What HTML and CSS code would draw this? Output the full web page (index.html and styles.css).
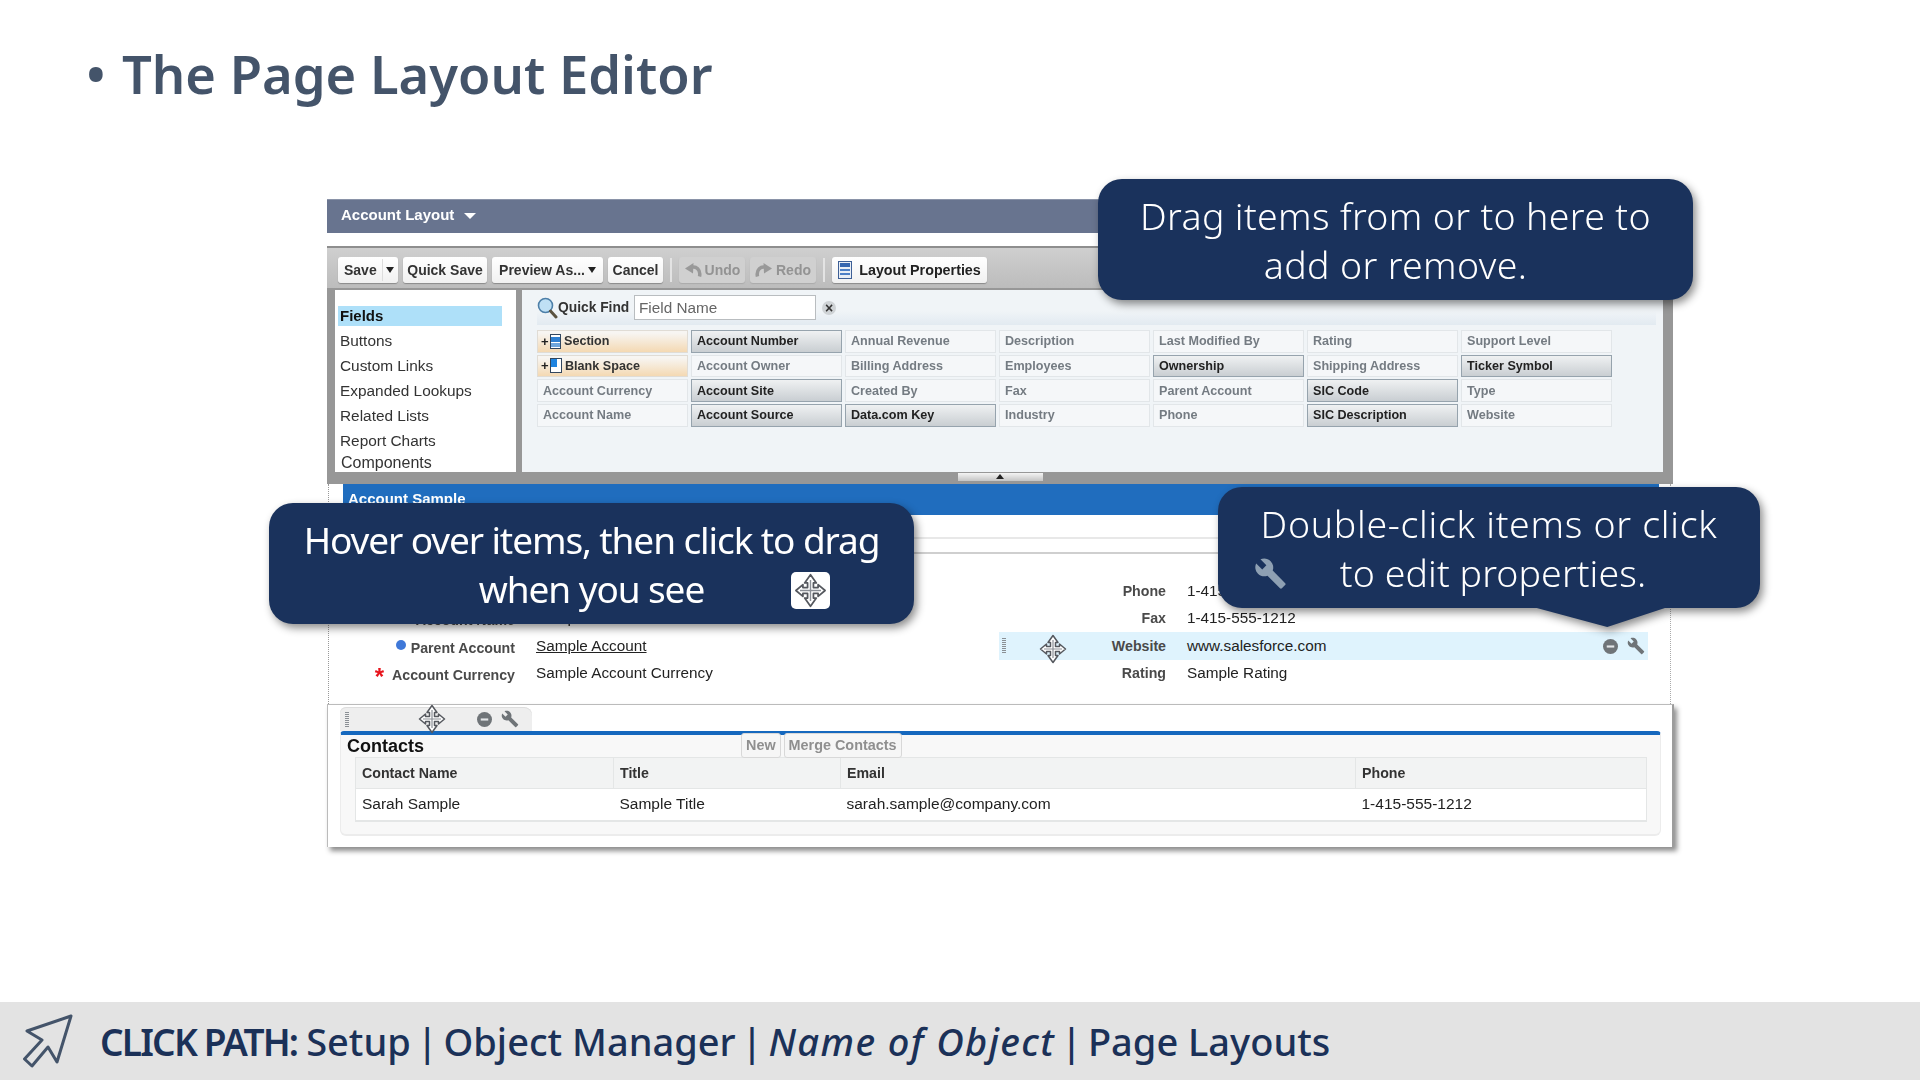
FILE: index.html
```html
<!DOCTYPE html>
<html lang="en">
<head>
<meta charset="utf-8">
<title>The Page Layout Editor</title>
<link rel="stylesheet" href="styles.css">
</head>
<body>
<svg class="defs" width="0" height="0" aria-hidden="true">
  <defs>
    <symbol id="move" viewBox="0 0 28 30">
      <path d="M14 1.5 19 8.5H16.5V12.5H20.5V10L26.5 15 20.5 20V17.5H16.5V21.5H19L14 28.5 9 21.5H11.5V17.5H7.5V20L1.5 15 7.5 10V12.5H11.5V8.5H9Z" fill="#fff" stroke="#55585e" stroke-width="1.5" stroke-linejoin="round"/>
      <path d="M14 6V24M5 15H23" stroke="#8b8f96" stroke-width="1.2" fill="none"/>
    </symbol>
    <symbol id="wrench" viewBox="0 0 24 24">
      <path d="M22.7 19l-9.1-9.1c.9-2.3.4-5-1.5-6.9-2-2-5-2.4-7.4-1.3L9 6 6 9 1.6 4.7C.4 7.1.9 10.1 2.9 12.1c1.9 1.9 4.6 2.4 6.9 1.5l9.1 9.1c.4.4 1 .4 1.4 0l2.3-2.3c.5-.4.5-1.1.1-1.4z"/>
    </symbol>
    <symbol id="minus" viewBox="0 0 14 14">
      <circle cx="7" cy="7" r="7" fill="#6f7478"/>
      <rect x="3.5" y="6" width="7" height="2" fill="#e4e6e8"/>
    </symbol>
  </defs>
</svg>
<main class="slide">
  <h1 class="title"><span class="bullet">•</span>The Page Layout Editor</h1>

  <section class="shot">
    <div class="layout-bar">Account Layout <i class="caret caret-white"></i></div>

    <div class="editor">
      <div class="toolbar">
        <button class="btn btn-split">Save<span class="split"><i class="caret"></i></span></button>
        <button class="btn btn-quick">Quick Save</button>
        <button class="btn btn-preview">Preview As...<i class="caret"></i></button>
        <button class="btn btn-cancel">Cancel</button>
        <span class="sep"></span>
        <button class="btn btn-off">
          <svg width="18" height="16" viewBox="0 0 18 16"><path d="M15.500 14.500C17 8 12 3.500 7 5.500" fill="none" stroke="#999" stroke-width="3.500"/><path d="M1 6.500 9.500 1 9 11.500Z" fill="#999"/></svg>Undo</button>
        <button class="btn btn-off">
          <svg width="18" height="16" viewBox="0 0 18 16"><path d="M2.500 14.500C1 8 6 3.500 11 5.500" fill="none" stroke="#999" stroke-width="3.500"/><path d="M17 6.500 8.500 1 9 11.500Z" fill="#999"/></svg>Redo</button>
        <span class="sep"></span>
        <button class="btn btn-props">
          <svg width="14" height="18" viewBox="0 0 14 18"><rect x=".5" y=".5" width="13" height="17" fill="#e8eef6" stroke="#3d5f96"/><rect x="2" y="2" width="10" height="4" fill="#3566b0"/><path d="M2 8h10v2H2zM2 12h10v2H2z" fill="#4c7fc6"/></svg>Layout Properties</button>
      </div>

      <div class="editor-body">
        <nav class="side">
          <a class="side-item side-on">Fields</a>
          <a class="side-item">Buttons</a>
          <a class="side-item">Custom Links</a>
          <a class="side-item">Expanded Lookups</a>
          <a class="side-item">Related Lists</a>
          <a class="side-item">Report Charts</a>
          <a class="side-item side-last">Components</a>
        </nav>
        <div class="pane">
          <div class="quick">
            <svg class="lens" width="21" height="22" viewBox="0 0 21 22"><circle cx="8.500" cy="8.500" r="7" fill="#bfe0f5" stroke="#4d7fa8" stroke-width="1.600"/><path d="M13.500 14 19 20" stroke="#5b5340" stroke-width="3" stroke-linecap="round"/></svg>
            <b class="quick-label">Quick Find</b>
            <span class="quick-input">Field Name</span>
            <span class="quick-clear">×</span>
          </div>
          <div class="palette">
            <div class="tile tile-add"><span class="plus">+</span><svg width="11" height="15" viewBox="0 0 11 15"><rect x=".5" y=".5" width="10" height="14" fill="#fff" stroke="#31465f"/><rect x="1" y="3" width="9" height="5" fill="#2f7fd0"/><rect x="1" y="9" width="9" height="4" fill="#6fa6dc"/></svg>Section</div>
            <div class="tile tile-on">Account Number</div>
            <div class="tile">Annual Revenue</div>
            <div class="tile">Description</div>
            <div class="tile">Last Modified By</div>
            <div class="tile">Rating</div>
            <div class="tile">Support Level</div>

            <div class="tile tile-add"><span class="plus">+</span><svg width="12" height="15" viewBox="0 0 12 15"><rect x=".5" y=".5" width="11" height="14" fill="#fff" stroke="#31465f"/><rect x="1" y="1" width="6" height="8" fill="#1f84e0"/></svg>Blank Space</div>
            <div class="tile">Account Owner</div>
            <div class="tile">Billing Address</div>
            <div class="tile">Employees</div>
            <div class="tile tile-on">Ownership</div>
            <div class="tile">Shipping Address</div>
            <div class="tile tile-on">Ticker Symbol</div>

            <div class="tile">Account Currency</div>
            <div class="tile tile-on">Account Site</div>
            <div class="tile">Created By</div>
            <div class="tile">Fax</div>
            <div class="tile">Parent Account</div>
            <div class="tile tile-on">SIC Code</div>
            <div class="tile">Type</div>

            <div class="tile">Account Name</div>
            <div class="tile tile-on">Account Source</div>
            <div class="tile tile-on">Data.com Key</div>
            <div class="tile">Industry</div>
            <div class="tile">Phone</div>
            <div class="tile tile-on">SIC Description</div>
            <div class="tile">Website</div>
          </div>
        </div>
      </div>
      <div class="editor-foot"><span class="collapse"><i class="caret-up"></i></span></div>
    </div>

    <div class="canvas">
      <div class="record-bar">Account Sample</div>
      <div class="band"></div>
      <div class="fields">
        <div class="col">
          <div class="row"></div>
          <div class="row"><span class="lab lab-low">Account Name</span><span class="val">Sample Account Name</span></div>
          <div class="row"><span class="lab lab-low"><i class="dot"></i>Parent Account</span><a class="val val-link">Sample Account</a></div>
          <div class="row"><span class="lab lab-low"><i class="star">*</i>Account Currency</span><span class="val">Sample Account Currency</span></div>
        </div>
        <div class="col col-right">
          <div class="row"><span class="lab">Phone</span><span class="val">1-415-555-1212</span></div>
          <div class="row"><span class="lab">Fax</span><span class="val">1-415-555-1212</span></div>
          <div class="row row-hover">
            <i class="handle handle-row"></i>
            <svg class="move move-row"><use href="#move"/></svg>
            <span class="lab">Website</span><span class="val">www.salesforce.com</span>
            <span class="row-tools">
              <svg class="ico-minus"><use href="#minus"/></svg>
              <svg class="ico-wrench"><use href="#wrench"/></svg>
            </span>
          </div>
          <div class="row"><span class="lab">Rating</span><span class="val">Sample Rating</span></div>
        </div>
      </div>
    </div>

    <div class="related-zone">
      <div class="tab">
        <i class="handle"></i>
        <svg class="move move-tab"><use href="#move"/></svg>
        <svg class="ico-minus ico-minus-tab"><use href="#minus"/></svg>
        <svg class="ico-wrench ico-wrench-tab"><use href="#wrench"/></svg>
      </div>
      <div class="related">
        <div class="related-head">
          <b class="related-title">Contacts</b>
          <span class="ghost">New</span>
          <span class="ghost">Merge Contacts</span>
        </div>
        <table class="grid">
          <thead><tr><th class="c1">Contact Name</th><th class="c2">Title</th><th class="c3">Email</th><th class="c4">Phone</th></tr></thead>
          <tbody><tr><td>Sarah Sample</td><td>Sample Title</td><td>sarah.sample@company.com</td><td>1-415-555-1212</td></tr></tbody>
        </table>
      </div>
    </div>
  </section>

  <div class="callout callout-drag">Drag items from or to here to<br>add or remove.</div>
  <div class="callout callout-hover">Hover over items, then click to drag<br>when you see
    <span class="chip"><svg class="chip-move"><use href="#move"/></svg></span>
  </div>
  <div class="callout callout-edit"><span class="edit-first">Double-click items or click</span><br><span class="edit-line">to edit properties.</span>
    <svg class="callout-wrench"><use href="#wrench"/></svg>
  </div>

  <footer class="path">
    <svg class="plane" width="60" height="60" viewBox="0 0 60 60"><path d="M51 5 7 20 22 29 4.500 48 12 55 28 36 37 51Z" fill="none" stroke="#44546a" stroke-width="3" stroke-linejoin="round"/></svg>
    <p class="path-text"><b>CLICK PATH:</b> Setup | <span class="seg">Object Manager</span> | <em class="seg">Name of Object</em> | <span class="seg">Page Layouts</span></p>
  </footer>
</main>
</body>
</html>
```

FILE: styles.css
```css
* { box-sizing: border-box; }
html, body { margin: 0; padding: 0; background: #fff; }
.defs { position: absolute; }
.slide {
  position: relative;
  width: 1920px;
  height: 1080px;
  overflow: hidden;
  display: flex;
  flex-direction: column;
  font-family: "Liberation Sans", Arial, sans-serif;
}

/* title */
.title {
  margin: 0;
  height: 199px;
  padding: 35px 0 0 86px;
  font: 600 52.500px/78px "Noto Sans", sans-serif;
  color: #44546a;
}
.bullet { display: inline-block; width: 36px; }

/* screenshot */
.shot { width: 1348px; margin-left: 327px; filter: blur(.35px); }
.layout-bar {
  height: 34px;
  padding-left: 14px;
  background: #68748f;
  border-top: 1px solid #8a93a8;
  color: #fff;
  font: bold 15px/30px "Liberation Sans", sans-serif;
}
.caret {
  display: inline-block;
  width: 0; height: 0;
  border: 4px solid transparent;
  border-top: 6px solid #222;
  border-bottom: 0;
  vertical-align: middle;
}
.caret-white { border-top-color: #fff; border-left-width: 6px; border-right-width: 6px; margin-left: 5px; }

.editor {
  width: 1346px;
  height: 238px;
  margin-top: 13px;
  display: flex;
  flex-direction: column;
  background: #979797;
  border-top: 2px solid #8e8e8e;
}
.toolbar {
  height: 40px;
  flex: none;
  display: flex;
  align-items: flex-start;
  padding: 9px 0 0 11px;
  gap: 5px;
  background: linear-gradient(#cfcfcf, #bcbcbc);
}
.btn {
  height: 26px;
  border: 0;
  border-radius: 3px;
  padding: 0;
  display: inline-flex;
  align-items: center;
  justify-content: center;
  gap: 5px;
  background: linear-gradient(#fff, #f1f1f1);
  box-shadow: 0 1px 1px #8a8a8a;
  color: #333;
  font: bold 14px "Liberation Sans", sans-serif;
  white-space: nowrap;
}
.btn-split { width: 60px; justify-content: flex-start; padding-left: 6px; gap: 5px; }
.split { border-left: 1px solid #ddd; height: 22px; width: 17px; display: flex; align-items: center; justify-content: center; }
.btn-quick { width: 84px; }
.btn-preview { width: 111px; gap: 3px; }
.btn-cancel { width: 55px; }
.btn-off {
  width: 66px;
  gap: 3px;
  background: #d0d0d0;
  color: #939393;
  box-shadow: 0 1px 1px #aaa;
}
.btn-props { width: 155px; gap: 7px; color: #222; font-size: 14.300px; }
.sep { width: 2px; height: 24px; margin: 1px 2px 0; background: #e3e3e3; }

.editor-body {
  flex: 1;
  min-height: 0;
  display: flex;
  gap: 6px;
  padding: 2px 10px 0 8px;
}
.side { width: 181px; padding: 16px 0 0 3px; background: #fff; }
.side-item {
  display: block;
  height: 20px;
  margin-bottom: 5px;
  padding-left: 2px;
  font: 15.400px/20px "Liberation Sans", sans-serif;
  color: #333;
  white-space: nowrap;
}
.side-on { width: 164px; background: #aee0f9; font-weight: bold; color: #111; font-size: 15px; }
.side-last { margin: -3px 0 0 1px; font-size: 16px; }
.pane { flex: 1; background: #f0f4f7; padding: 0 7px 0 15px; }
.quick {
  height: 35px;
  display: flex;
  align-items: center;
  background: linear-gradient(#f0f4f7 60%, #e2eaf1);
}
.lens { flex: none; }
.quick-label { margin-left: 0; font-size: 13.800px; width: 76px; color: #333; white-space: nowrap; }
.quick-input {
  width: 182px;
  height: 25px;
  padding-left: 4px;
  background: #fff;
  border: 1px solid #b9bdc0;
  color: #666;
  font-size: 15.300px;
  line-height: 24px;
}
.quick-clear {
  width: 14px; height: 14px;
  margin-left: 6px;
  border-radius: 50%;
  background: #cfd3d6;
  color: #333;
  font: bold 14px/14px "Liberation Sans", sans-serif;
  text-align: center;
}
.palette {
  margin-top: 5px;
  display: grid;
  grid-template-columns: repeat(7, 151px);
  grid-auto-rows: 22.600px;
  column-gap: 3px;
  row-gap: 2.100px;
}
.tile {
  display: flex;
  align-items: center;
  padding-left: 5px;
  background: #f5f7f9;
  border: 1px solid #e2e6e9;
  color: #747b82;
  font: bold 12.600px "Liberation Sans", sans-serif;
  white-space: nowrap;
}
.tile-on {
  background: linear-gradient(#eff1f2, #c9ced2);
  border-color: #96a3ad;
  color: #222;
}
.tile-add {
  padding-left: 3px;
  gap: 3px;
  background: linear-gradient(#f7f5f2 10%, #f4d9b3);
  border-color: #e0dcd5;
  color: #333;
}
.plus { font-size: 13px; color: #222; width: 6px; }
.editor-foot { height: 12px; flex: none; display: flex; justify-content: center; }
.collapse {
  width: 85px; height: 8px;
  margin-top: 1px;
  display: flex;
  justify-content: center;
  background: linear-gradient(#f4f4f4, #c4c4c4);
}
.caret-up {
  width: 0; height: 0;
  margin-top: 1px;
  border: 4px solid transparent;
  border-bottom: 5px solid #222;
  border-top: 0;
}

.canvas {
  height: 220px;
  width: 1343px;
  margin-left: 1px;
  border-left: 1px dotted #999;
  border-right: 1px dotted #aaa;
}
.record-bar {
  height: 31px;
  margin: 0 11px 0 14px;
  padding-left: 5px;
  background: #206dbe;
  color: #fff;
  font: bold 15px/30px "Liberation Sans", sans-serif;
}
.band {
  height: 17px;
  margin-top: 22px;
  border-top: 2px solid #e8e8e8;
  border-bottom: 2px solid #cfcfcf;
}
.fields {
  padding-top: 23px;
  display: grid;
  grid-template-columns: 670px 649px;
}
.col { display: flex; flex-direction: column; }
.row {
  position: relative;
  height: 27.500px;
  display: grid;
  grid-template-columns: 186px 1fr;
  column-gap: 21px;
  align-items: center;
}
.col-right .row { grid-template-columns: 167px 1fr; }
.lab {
  text-align: right;
  font: bold 14.200px "Liberation Sans", sans-serif;
  color: #4a4a4a;
  white-space: nowrap;
}
.lab-low { padding-top: 4px; }
.val { font: 15.300px "Liberation Sans", sans-serif; color: #222; white-space: nowrap; }
.val-link { text-decoration: underline; }
.dot {
  display: inline-block;
  width: 10px; height: 10px;
  margin-right: 5px;
  border-radius: 50%;
  background: #3f78d8;
  vertical-align: 3px;
}
.star {
  display: inline-block;
  margin-right: 8px;
  color: #e8141c;
  font: bold 24px/14px "Liberation Sans", sans-serif;
  vertical-align: -5px;
}
.row-hover { background: #dff3fd; }
.handle {
  display: block;
  width: 4px; height: 15px;
  background: repeating-linear-gradient(#8a8f94 0 1px, transparent 1px 2px);
}
.handle-row { position: absolute; left: 3px; top: 6px; }
.move { width: 28px; height: 30px; display: block; }
.move-row { position: absolute; left: 40px; top: 2px; }
.row-tools { position: absolute; right: 3px; top: 5px; display: flex; align-items: center; gap: 9px; }
.ico-minus { width: 15px; height: 15px; display: block; }
.ico-wrench { width: 18px; height: 18px; display: block; fill: #6f7478; }

.related-zone {
  height: 143px;
  width: 1347px;
  padding-top: 2px;
  background: #fff;
  border-top: 1px solid #bbb;
  border-left: 1px solid #bbb;
  border-right: 2px solid #9c9c9c;
  box-shadow: 3px 4px 5px rgba(0, 0, 0, .45);
}
.tab {
  width: 192px;
  height: 24px;
  margin-left: 12px;
  padding-left: 5px;
  display: flex;
  align-items: center;
  background: #eeeeee;
  border-radius: 6px 8px 0 0;
  box-shadow: inset 0 1px 0 #ddd;
}
.move-tab { margin-left: 69px; position: relative; z-index: 1; flex: none; }
.ico-minus-tab { margin-left: 31px; }
.ico-wrench-tab { margin-left: 9px; }
.related {
  width: 1321px;
  height: 105px;
  margin-left: 12px;
  background: #f8f8f8;
  border-top: 4px solid #1568be;
  border-left: 1px solid #ececec;
  border-right: 1px solid #ececec;
  border-bottom: 2px solid #ececec;
  border-radius: 4px 4px 6px 6px;
}
.related-head {
  height: 22px;
  display: flex;
  align-items: center;
}
.related-title { width: 400px; padding-left: 6px; font-size: 18px; color: #111; }
.ghost {
  height: 25px;
  margin: -2px 3px -1px 0;
  padding: 0 4px;
  background: #f6f6f6;
  border: 1px solid #d8d8d8;
  border-radius: 3px;
  color: #8f8f8f;
  font: bold 14.400px/23px "Liberation Sans", sans-serif;
}
.grid {
  width: 1291px;
  margin-left: 14px;
  table-layout: fixed;
  border-collapse: collapse;
  background: #fff;
}
.c1 { width: 258px; }
.c2 { width: 227px; }
.c3 { width: 515px; }
.c4 { width: 291px; }
.grid th {
  height: 31px;
  padding: 0 0 0 6px;
  text-align: left;
  background: #f2f3f3;
  border: 1px solid #e4e6e6;
  font: bold 14.200px "Liberation Sans", sans-serif;
  color: #333;
}
.grid td {
  height: 32px;
  padding: 0 0 0 6px;
  border-bottom: 2px solid #e4e6e6;
  font: 15.500px "Liberation Sans", sans-serif;
  color: #222;
}
.grid td:first-child { border-left: 1px solid #e4e6e6; }
.grid td:last-child { border-right: 1px solid #e4e6e6; }

/* callouts */
.callout {
  position: absolute;
  display: block;
  height: 121px;
  padding-top: 12px;
  background: #1a325c;
  border-radius: 24px;
  color: #fff;
  font: 300 37.500px/49px "Noto Sans", sans-serif;
  text-align: center;
  white-space: nowrap;
  filter: drop-shadow(3px 4px 4px rgba(0, 0, 0, .45));
}
.callout-drag { left: 1098px; top: 179px; width: 595px; letter-spacing: .35px; }
.callout-hover { left: 269px; top: 503px; width: 645px; font-weight: 400; font-size: 37px; letter-spacing: -1.100px; }
.callout-edit { left: 1218px; top: 487px; width: 542px; }
.edit-first { letter-spacing: .7px; }
.callout-edit::after {
  content: "";
  position: absolute;
  left: 315px;
  top: 120px;
  width: 135px;
  height: 20px;
  background: #1a325c;
  clip-path: polygon(0 0, 100% 0, 55% 100%);
}
.edit-line { padding-left: 8px; letter-spacing: .1px; }
.chip {
  position: absolute;
  left: 522px;
  top: 69px;
  width: 39px;
  height: 37px;
  display: flex;
  align-items: center;
  justify-content: center;
  background: #fff;
  border-radius: 5px;
}
.chip-move { width: 33px; height: 35px; }
.callout-wrench {
  position: absolute;
  left: 36px;
  top: 70px;
  width: 33px;
  height: 33px;
  fill: #8ea0b3;
}

/* footer */
.path {
  margin-top: auto;
  height: 78px;
  display: flex;
  align-items: center;
  padding-left: 20px;
  background: #e3e3e3;
}
.plane { flex: none; }
.path-text {
  margin: 0 0 0 20px;
  font: 500 38px "Noto Sans", sans-serif;
  color: #1b3158;
  white-space: nowrap;
  word-spacing: -4px;
}
.path-text b { font-weight: 600; font-size: 37px; letter-spacing: -1.800px; word-spacing: 0; margin-right: 3px; }
.seg { word-spacing: 0; }
em.seg { letter-spacing: 1.400px; }
```
